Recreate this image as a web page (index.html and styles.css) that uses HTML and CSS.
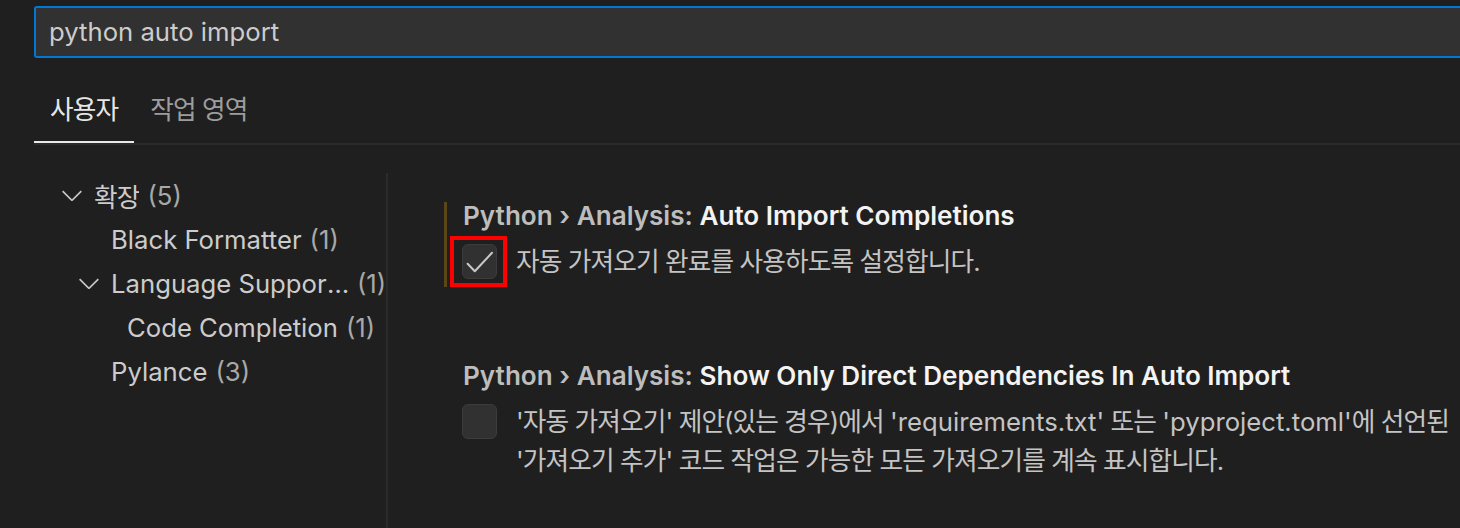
FILE: index.html
```html
<!DOCTYPE html>
<html lang="ko">
<head>
<meta charset="utf-8">
<title>Settings</title>
<link rel="stylesheet" href="styles.css">
</head>
<body>
<div class="page">
  <div class="search"><span class="search-text">python auto import</span></div>

  <div class="tabs">
    <div class="tab active"><span class="ko">사용자</span></div>
    <div class="tab"><span class="ko">작업 영역</span></div>
  </div>

  <div class="main">
    <nav class="tree">
      <div class="row l0">
        <svg class="chev" viewBox="0 0 16 16" width="32" height="32"><path d="M7.976 10.072l4.357-4.357.62.618L8.284 11h-.618L3 6.333l.619-.618 4.357 4.357z"/></svg>
        <span class="name ko">확장</span><span class="count">(5)</span>
      </div>
      <div class="row l1">
        <span class="name">Black Formatter</span><span class="count">(1)</span>
      </div>
      <div class="row l1c">
        <svg class="chev" viewBox="0 0 16 16" width="32" height="32"><path d="M7.976 10.072l4.357-4.357.62.618L8.284 11h-.618L3 6.333l.619-.618 4.357 4.357z"/></svg>
        <span class="name trunc">Language Support for Python</span><span class="count">(1)</span>
      </div>
      <div class="row l2">
        <span class="name">Code Completion</span><span class="count">(1)</span>
      </div>
      <div class="row l1">
        <span class="name">Pylance</span><span class="count">(3)</span>
      </div>
    </nav>

    <section class="settings">
      <div class="setting modified">
        <div class="title"><span class="cat">Python › Analysis: </span><span class="label">Auto Import Completions</span></div>
        <div class="value">
          <div class="checkbox">
            <svg class="check" viewBox="0 0 33 33" width="33" height="33"><polyline points="4.6,18.8 11.8,26.2 29,7.8"/></svg>
            <div class="highlight"></div>
          </div>
          <div class="desc"><span class="ko">자동 가져오기 완료를 사용하도록 설정합니다.</span></div>
        </div>
      </div>

      <div class="setting second">
        <div class="title"><span class="cat">Python › Analysis: </span><span class="label">Show Only Direct Dependencies In Auto Import</span></div>
        <div class="value">
          <div class="checkbox"></div>
          <div class="desc"><span class="ko">'자동 가져오기' 제안(있는 경우)에서 </span>'requirements.txt'<span class="ko"> 또는 </span>'pyproject.toml'<span class="ko">에 선언된</span><br><span class="ko">'가져오기 추가' 코드 작업은 가능한 모든 가져오기를 계속 표시합니다.</span></div>
        </div>
      </div>
    </section>
  </div>
</div>
</body>
</html>
```

FILE: styles.css
```css
* { box-sizing: border-box; }

html, body {
  margin: 0;
  height: 100%;
}

body {
  background: #1f1f1f;
  font-family: Inter, "Noto Sans CJK KR", sans-serif;
  font-size: 25.7px;
  color: #cccccc;
  overflow: hidden;
}

.ko { letter-spacing: -0.9px; }

.page {
  padding-left: 34px;
  height: 100%;
  display: flex;
  flex-direction: column;
  overflow: hidden;
}

/* search */
.search {
  flex-shrink: 0;
  margin-top: 6px;
  height: 52px;
  width: calc(100% + 12px);
  border: 2px solid #0078d4;
  border-radius: 3px;
  background: #313131;
  padding-left: 13px;
  display: flex;
  align-items: center;
}

.search-text {
  color: #cccccc;
  line-height: 48px;
}

/* tabs */
.tabs {
  flex-shrink: 0;
  margin-top: 32px;
  display: flex;
  border-bottom: 2px solid #2b2b2b;
}

.tab {
  padding: 0 16px 11px;
  line-height: 40px;
  color: #9d9d9d;
  border-bottom: 2px solid transparent;
}

.tab.active {
  color: #e7e7e7;
  border-bottom-color: #e7e7e7;
}

/* main area */
.main {
  flex: 1;
  min-height: 0;
  margin-top: 28px;
  display: flex;
}

.tree {
  width: 352px;
  flex-shrink: 0;
}

.row {
  display: flex;
  align-items: center;
  height: 44px;
  white-space: nowrap;
  color: #cccccc;
}

.chev {
  flex-shrink: 0;
  fill: #c5c5c5;
  margin-right: 6px;
}

.l0 { padding-left: 22px; }
.l1 { padding-left: 77px; }
.l1c { padding-left: 39px; }
.l2 { padding-left: 93px; }

.name {
  min-width: 0;
  overflow: hidden;
  text-overflow: ellipsis;
}

.name.trunc {
  flex: 0 0 auto;
  max-width: 241px;
}

.count {
  flex-shrink: 0;
  margin-left: 8px;
  color: #a8a8a8;
}

.trunc + .count { margin-left: 5px; }

/* settings */
.settings {
  flex: 1;
  min-width: 0;
  border-left: 2px solid #2b2b2b;
  padding: 29px 0 0 56px;
}

.setting {
  border-left: 3px solid transparent;
  padding-left: 16px;
  padding-bottom: 6px;
}

.setting.modified { border-left-color: #5d4616; }

.setting.second { margin-top: 75px; }

.title {
  line-height: 28px;
  font-size: 26.1px;
  font-weight: 600;
  white-space: nowrap;
}

.cat { color: #bdbdbd; }
.label { color: #f3f3f3; }

.value {
  display: flex;
  align-items: flex-start;
  margin-top: 14px;
  margin-left: -1px;
}

.checkbox {
  position: relative;
  flex-shrink: 0;
  width: 35px;
  height: 35px;
  border: 1px solid #3c3c3c;
  border-radius: 6px;
  background: #313131;
}

.check {
  position: absolute;
  left: 0;
  top: 0;
  fill: none;
  stroke: #c8c8c8;
  stroke-width: 2;
  stroke-linecap: round;
  stroke-linejoin: round;
}

.highlight {
  position: absolute;
  left: -13px;
  top: -9px;
  width: 57px;
  height: 51px;
  border: 4px solid #ff0000;
}

.desc {
  margin-left: 19px;
  margin-top: -2px;
  line-height: 39px;
  white-space: nowrap;
  color: #c4c4c4;
}
```
